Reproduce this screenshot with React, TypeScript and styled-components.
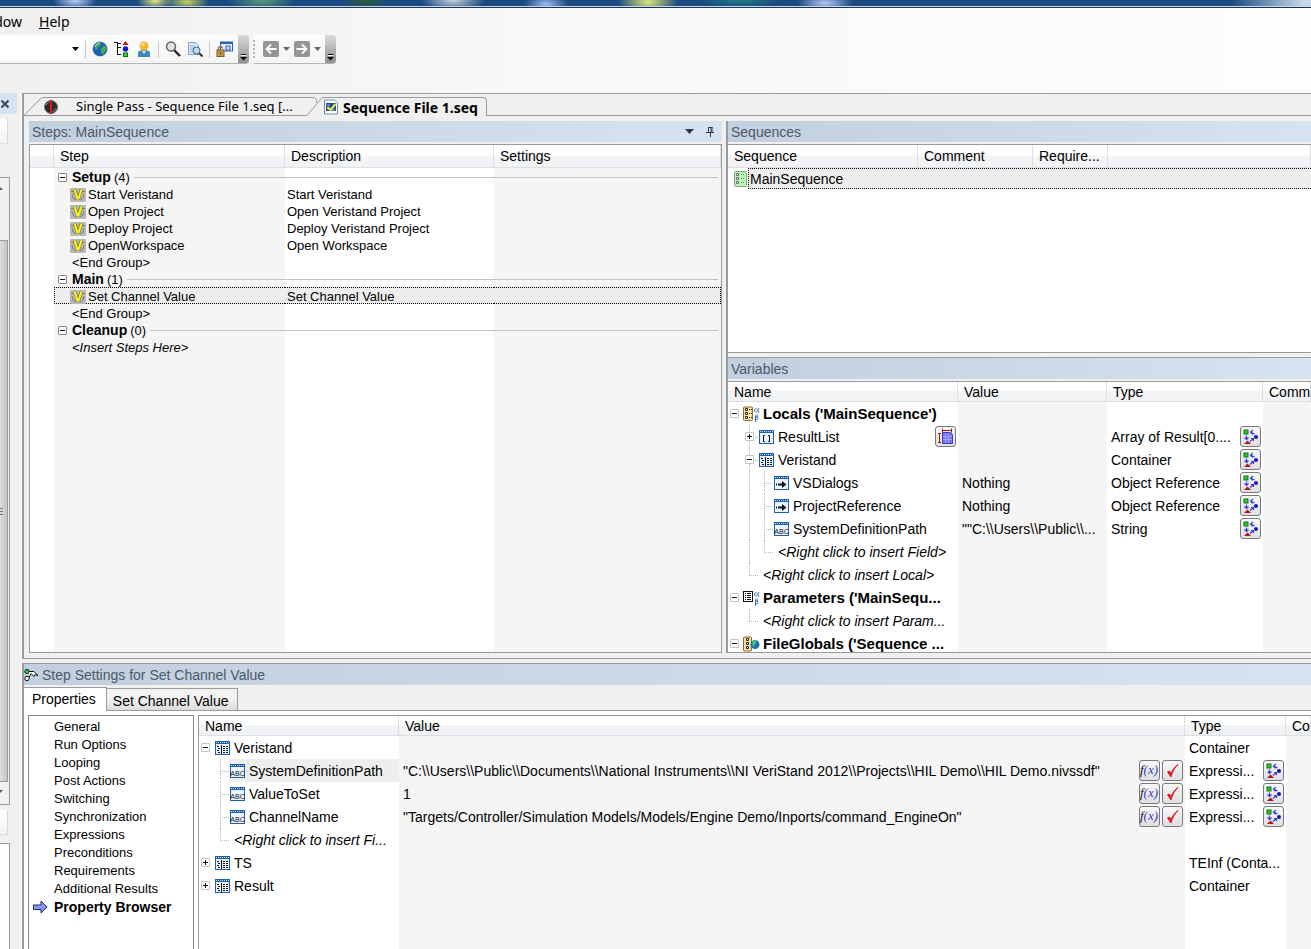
import React from "react";
import styled, { createGlobalStyle, css } from "styled-components";

const SANS = '"Liberation Sans", Arial, sans-serif';
const UI = '"Noto Sans", "Open Sans", sans-serif';
const LINE = "#999b9e";
const STRIPE = "#f5f5f5";
const FACE = "#f0f0f0";

const GlobalStyle = createGlobalStyle`
  *, *::before, *::after { box-sizing: border-box; }
  body { margin: 0; background: ${FACE}; color: #000; font: 14px/16px ${SANS}; overflow: hidden; }
  button, input { font: inherit; color: inherit; padding: 0; margin: 0; border: 0; background: none; }
  svg { display: block; flex: none; }
  ul { list-style: none; margin: 0; padding: 0; }
`;

/* ---------- window chrome ---------- */

const Window = styled.div`
  display: flex;
  flex-direction: column;
  height: 100vh;
  min-height: 600px;
`;

const GlassStrip = styled.div`
  height: 8px;
  flex: none;
  border-bottom: 1px solid #1d3557;
  background:
    linear-gradient(#c9d6e4, #c9d6e4) 0 6px / 100% 1px no-repeat,
    radial-gradient(ellipse 22px 9px at 75px 1px, #b9cdf6, transparent),
    radial-gradient(ellipse 18px 9px at 155px 1px, #e3e47c, transparent),
    radial-gradient(ellipse 22px 9px at 187px 2px, #c6d05e, transparent),
    radial-gradient(ellipse 34px 12px at 262px 0, #5d9a78, transparent),
    radial-gradient(ellipse 24px 10px at 365px 1px, #2b5b3f, transparent),
    radial-gradient(ellipse 32px 12px at 453px 0, #c8d3dc, transparent),
    radial-gradient(ellipse 22px 9px at 546px 4px, #9dbdf2, transparent),
    radial-gradient(ellipse 30px 14px at 648px 2px, #dbe67a, transparent),
    radial-gradient(ellipse 40px 8px at 740px 0, #1f8084, transparent),
    radial-gradient(ellipse 28px 9px at 825px 3px, #b5c8f8, transparent),
    linear-gradient(90deg, transparent calc(100% - 80px), #c5d8e6 calc(100% - 8px)),
    #1b4a82;
`;

const CommandArea = styled.header`
  flex: none;
  height: 85px;
  background: linear-gradient(90deg, #f0f0f0, #f8f8f8 40%, #fdfdfd);
`;

const MenuBar = styled.nav`
  display: flex;
  gap: 17px;
  height: 27px;
  font: 14px/28px ${UI};
`;

const MenuItem = styled.button<{ $cut?: boolean }>`
  display: flex;
  justify-content: flex-end;
  white-space: nowrap;
  ${(p) => p.$cut && css`width: 22px; overflow: hidden;`}
`;

const ToolbarRow = styled.div`
  display: flex;
  gap: 5px;
`;

const Toolbar = styled.div`
  display: flex;
  align-items: center;
  height: 29px;
  background: linear-gradient(#fcfcfc, #f4f4f4);
  border-bottom: 1px solid #b4b4b4;
  border-radius: 0 3px 3px 0;
`;

const Combo = styled.div`
  display: flex;
  width: 82px;
  height: 24px;
  background: #fff;
`;

const ComboInput = styled.input`
  width: 68px;
`;

const ToolButton = styled.button<{ $w?: number }>`
  display: flex;
  align-items: center;
  justify-content: center;
  width: ${(p) => p.$w ?? 22}px;
  height: 24px;
`;

const Separator = styled.span`
  width: 1px;
  height: 17px;
  margin: 0 3px;
  background: #c5c8cc;
`;

const Gripper = styled.span`
  width: 2px;
  height: 18px;
  margin: 0 6px 0 -1px;
  background: repeating-linear-gradient(#b5b5b5 0 2px, transparent 2px 4px);
`;

const Overflow = styled.button`
  display: flex;
  align-items: flex-end;
  justify-content: center;
  align-self: stretch;
  width: 11px;
  margin-left: 3px;
  padding-bottom: 2px;
  border-radius: 0 3px 3px 0;
  background: linear-gradient(#d9d9d9, #8f8f8f);
`;

/* ---------- overall body ---------- */

const Body = styled.div`
  display: flex;
  flex: 1;
  min-height: 0;
`;

const SidePane = styled.aside`
  display: flex;
  flex-direction: column;
  width: 22px;
  padding-right: 4px;
  background: ${FACE};
  border-right: 1px solid #fafafa;
`;

const SideHeader = styled.div`
  display: flex;
  align-items: center;
  height: 21px;
  flex: none;
  background: #d5e2ef;
`;

const SideButton = styled.button`
  width: 8px;
  height: 25px;
  flex: none;
  margin: 5px 0 8px;
  background: linear-gradient(#fff, #f3f3f3);
  border-right: 1px solid #d2dcdc;
  border-bottom: 1px solid #dedede;
`;

const SideScroll = styled.div`
  display: flex;
  flex-direction: column;
  align-items: flex-start;
  justify-content: space-between;
  flex: 1;
  width: 10px;
  margin-top: 25px;
  border: solid ${LINE};
  border-width: 1px 1px 1px 0;
`;

const SideThumb = styled.div`
  display: flex;
  align-items: center;
  flex: 1;
  width: 8px;
  margin: 44px 0 4px;
  border: 1px solid ${LINE};
  border-left: 0;
  background: linear-gradient(90deg, #dcdcde, #c3c4c8);
`;

const SideList = styled.div`
  width: 10px;
  height: 106px;
  flex: none;
  background: #fff;
  border: solid ${LINE};
  border-width: 1px 1px 0 0;
`;

const Main = styled.main`
  display: flex;
  flex-direction: column;
  gap: 4px;
  flex: 1;
  min-width: 0;
`;

const Document = styled.section`
  display: flex;
  flex-direction: column;
  flex: 566 1 0;
  min-height: 0;
  border: solid ${LINE};
  border-width: 1px 0 1px 2px;
`;

const FileTabs = styled.div`
  display: flex;
  align-items: flex-end;
  flex: none;
  height: 22px;
  border-bottom: 1px solid ${LINE};
`;

const FileTab = styled.button<{ $active?: boolean }>`
  display: flex;
  height: 19px;
  margin-bottom: -1px;
  font: ${(p) => (p.$active ? "bold 14px" : "13px")}/19px ${UI};
`;

const FileTabBody = styled.span<{ $active?: boolean }>`
  display: flex;
  align-items: center;
  gap: ${(p) => (p.$active ? 4 : 17)}px;
  height: 19px;
  border-top: 1px solid ${LINE};
  white-space: nowrap;
  ${(p) =>
    p.$active
      ? css`padding-right: 8px; background: ${FACE}; border-right: 1px solid ${LINE}; border-radius: 0 4px 0 0;`
      : css`width: 264px; border-bottom: 1px solid ${LINE};`}
`;

const Workspace = styled.div`
  display: grid;
  grid-template-columns: minmax(0, 693fr) minmax(0, 585fr);
  gap: 4px;
  flex: 1;
  min-height: 0;
  padding: 5px 0 5px 5px;
`;

const RightStack = styled.div`
  display: grid;
  grid-template-rows: minmax(0, 232fr) minmax(0, 296fr);
  gap: 4px;
  min-height: 0;
  border-left: 2px solid ${LINE};
`;

const Panel = styled.section<{ $ruled?: boolean }>`
  display: flex;
  flex-direction: column;
  min-width: 0;
  min-height: 0;
  ${(p) => p.$ruled && css`border-top: 1px solid ${LINE};`}
`;

const PanelHeader = styled.header`
  display: flex;
  align-items: center;
  gap: 3px;
  height: 21px;
  flex: none;
  margin-bottom: 2px;
  padding: 0 3px;
  color: #4b5a68;
  background: linear-gradient(90deg, #c1cfde, #d6e4f1);
`;

const PanelTitle = styled.h2`
  flex: 1;
  margin: 0;
  font: 14px/20px ${SANS};
`;

const HeaderButton = styled.button`
  display: flex;
  justify-content: center;
  width: 18px;
`;

/* ---------- grids ---------- */

const GridBox = styled.div<{ $bands: string; $sides?: boolean }>`
  flex: 1;
  min-width: 0;
  min-height: 0;
  overflow: hidden;
  border: solid ${LINE};
  border-width: ${(p) => (p.$sides ? "1px" : "1px 0")};
  background: linear-gradient(90deg, ${(p) => p.$bands}) #fff;
`;

const Grid = styled.table`
  width: 100%;
  table-layout: fixed;
  border-collapse: separate;
  border-spacing: 0;
`;

const HeadCell = styled.th<{ $w?: number; $h: number }>`
  width: ${(p) => (p.$w ? `${p.$w}px` : "auto")};
  height: ${(p) => p.$h}px;
  padding: 0 0 0 6px;
  overflow: hidden;
  white-space: nowrap;
  text-align: left;
  font-weight: normal;
  background: linear-gradient(#fff 45%, #f3f4f6 50%, #f1f2f4);
  border: solid #dcdfe3;
  border-width: 0 1px 1px 0;
`;

const StepCell = styled.td<{ $sel?: "start" | "mid" | "end" }>`
  height: 17px;
  padding: 0 0 0 2px;
  font-size: 13px;
  line-height: 15px;
  white-space: nowrap;
  ${(p) =>
    p.$sel &&
    css`
      background: #eee;
      border: dotted #000;
      border-width: 1px ${p.$sel === "end" ? 1 : 0}px 1px ${p.$sel === "start" ? 1 : 0}px;
    `}
`;

const StepLine = styled.div<{ $indent?: number }>`
  display: flex;
  align-items: center;
  gap: 2px;
  height: 15px;
  padding-top: 2px;
  padding-left: ${(p) => p.$indent ?? 0}px;
`;

const GroupLine = styled(StepLine)`
  height: 17px;
  gap: 3px;
  padding-right: 3px;
  &::after {
    content: "";
    flex: 1;
    height: 1px;
    margin-left: 1px;
    background: #c3c3c3;
  }
`;

const GroupName = styled.strong`
  font-size: 14px;
  padding-left: 2px;
`;

const SequenceCell = styled.td`
  height: 21px;
  padding: 0;
`;

const SequenceLine = styled.div`
  display: flex;
  align-items: center;
  gap: 1px;
  padding-left: 6px;
`;

const SequenceName = styled.span`
  flex: 1;
  height: 21px;
  padding-left: 1px;
  line-height: 20px;
  background: #eee;
  border: dotted #000;
  border-width: 1px 0 1px 1px;
`;

const Expander = styled.button<{ $tree?: boolean }>`
  position: relative;
  width: 9px;
  height: 9px;
  flex: none;
  background: #fff;
  border: 1px solid ${(p) => (p.$tree ? "#c4c4c4" : "#8a8a8a")};
  border-radius: 1px;
`;

const TreeCell = styled.td<{ $pad?: number }>`
  height: 23px;
  padding: 0 0 0 ${(p) => p.$pad ?? 2}px;
  white-space: nowrap;
`;

const TreeLine = styled.div`
  display: flex;
  align-items: center;
  height: 23px;
`;

const Slot = styled.span<{ $mark: "none" | "pass" | "tee" | "end"; $own?: boolean }>`
  position: relative;
  display: flex;
  align-items: center;
  align-self: stretch;
  width: ${(p) => (p.$own ? 13 : 15)}px;
  flex: none;
  &::before {
    content: ${(p) => (p.$mark === "none" ? "none" : '""')};
    position: absolute;
    left: 4px;
    top: 0;
    height: ${(p) => (p.$mark === "end" ? "50%" : "100%")};
    border-left: 1px dotted #b8b8b8;
  }
  &::after {
    content: ${(p) => (p.$mark === "tee" || p.$mark === "end" ? '""' : "none")};
    position: absolute;
    left: 4px;
    right: 0;
    top: 50%;
    border-top: 1px dotted #b8b8b8;
  }
  & > button { z-index: 1; }
`;

const TreeLabel = styled.span<{ $kind?: "bold" | "hint"; $selected?: boolean }>`
  display: flex;
  align-items: center;
  gap: 3px;
  flex: 1;
  height: 23px;
  ${(p) => p.$kind === "bold" && css`font-weight: bold; font-size: 15px;`}
  ${(p) => p.$kind === "hint" && css`font-style: italic; padding-left: 5px;`}
  ${(p) => p.$selected && css`background: #eee;`}
`;

const WithButtons = styled.div`
  display: flex;
  align-items: center;
  gap: 2px;
  height: 23px;
  padding-right: 2px;
`;

const Grow = styled.span`
  flex: 1;
  min-width: 0;
`;

const GridButton = styled.button`
  display: flex;
  align-items: center;
  justify-content: center;
  width: 21px;
  height: 21px;
  flex: none;
  border: 1px solid #77797c;
  border-radius: 3px;
  background: linear-gradient(#f8f8f8, #dedfe2);
`;

/* ---------- step settings ---------- */

const Settings = styled.section`
  display: flex;
  flex-direction: column;
  flex: 286 1 0;
  min-height: 0;
  border-top: 1px solid ${LINE};
  border-left: 2px solid ${LINE};
`;

const SettingsHeader = styled(PanelHeader)`
  padding-left: 0;
`;

const SettingsTabs = styled.div`
  display: flex;
  align-items: flex-end;
  flex: none;
  height: 24px;
  border-bottom: 1px solid ${LINE};
  background: ${FACE};
`;

const SettingsTab = styled.button<{ $active?: boolean }>`
  border: solid ${LINE};
  border-width: 1px 1px 0 0;
  ${(p) =>
    p.$active
      ? css`height: 24px; margin-bottom: -1px; padding: 0 10px 1px 8px; background: #fff;`
      : css`height: 22px; padding: 2px 8px 0 6px; background: linear-gradient(#f2f2f2 45%, #dcdcdc);`}
`;

const SettingsPane = styled.div`
  display: flex;
  gap: 4px;
  flex: 1;
  min-height: 0;
  padding: 4px 0 0 4px;
  background: #fff;
`;

const CategoryList = styled.ul`
  width: 166px;
  flex: none;
  padding: 2px 4px;
  overflow: hidden;
  border: solid #85878a;
  border-width: 1px 1px 0 1px;
`;

const Category = styled.li<{ $active?: boolean }>`
  display: flex;
  align-items: center;
  height: 18px;
  padding-left: ${(p) => (p.$active ? 0 : 21)}px;
  gap: 6px;
  white-space: nowrap;
  font-size: ${(p) => (p.$active ? 14 : 13)}px;
  font-weight: ${(p) => (p.$active ? "bold" : "normal")};
`;

const PropertyBox = styled(GridBox)`
  border-width: 1px 0 0 1px;
`;

/* ---------- icons ---------- */

const Svg = ({ w = 16, h = 16, children }: { w?: number; h?: number; children: React.ReactNode }) => (
  <svg width={w} height={h} viewBox={`0 0 ${w} ${h}`} fill="none" aria-hidden="true">{children}</svg>
);

const Caret = ({ color = "#000" }: { color?: string }) => (
  <Svg w={7} h={4}><path d="M0 0h7L3.500 4z" fill={color} /></Svg>
);

const Sign = ({ plus }: { plus?: boolean }) => (
  <Svg w={7} h={7}><path d={plus ? "M1 3.500h5M3.500 1v5" : "M1 3.500h5"} stroke="#111" /></Svg>
);

const GlobeIcon = () => (
  <Svg>
    <circle cx="8" cy="8" r="7" fill="#1f5fc4" stroke="#16407f" strokeWidth=".6" />
    <path d="M3 4c2-3 5-2 6-2l-1 3-2 1-1 3-2-1zM9 7l4-3 1.500 3L13 11l-3 3-1-3z" fill="#39b04a" />
    <path d="M3 6c1-3 3-4 5-4" stroke="#a9d8ff" />
  </Svg>
);

const TypesIcon = () => (
  <Svg>
    <path d="M0 1.500h4M3.500 1v13M3.500 6.500H7M3.500 13.500H7M4 2.500h3" stroke="#111" />
    <path d="M11.500 0l3 4h-6z" fill="#c81414" />
    <circle cx="11.500" cy="8" r="2.700" fill="#1616c8" />
    <rect x="9.500" y="12" width="4" height="3.500" fill="#35e035" stroke="#0b6b0b" />
  </Svg>
);

const UserIcon = () => (
  <Svg>
    <path d="M2 16v-4c0-2 3-3 6-3s6 1 6 3v4z" fill="#3d86b5" />
    <path d="M6 10h4l-2 3z" fill="#d9ecf7" />
    <circle cx="8" cy="5" r="4.500" fill="#f5b52a" />
    <circle cx="7" cy="3.500" r="1.800" fill="#fde08b" />
  </Svg>
);

const SearchIcon = () => (
  <Svg>
    <path d="M9 9l6 6" stroke="#222" strokeWidth="2.400" />
    <circle cx="6" cy="5.500" r="4.500" fill="#dfe3e6" stroke="#666" strokeWidth="1.500" />
  </Svg>
);

const FindPageIcon = () => (
  <Svg>
    <path d="M1.500 1.500h7l3 3v9h-10z" fill="#dcebfb" stroke="#7da3cd" />
    <path d="M3 5h5M3 7h4M3 9h4M3 11h4" stroke="#8db5dd" />
    <path d="M12 12l3.500 3.500" stroke="#333" strokeWidth="2" />
    <circle cx="9.500" cy="9.500" r="3.500" fill="#b9dcf6" stroke="#44617e" />
  </Svg>
);

const LockIcon = () => (
  <Svg w={17}>
    <rect x="4.500" y="1" width="12" height="9" fill="#e7f1ff" stroke="#2d5fb4" />
    <path d="M4 2h13" stroke="#2d5fb4" strokeWidth="2" />
    <rect x="10" y="5" width="4" height="4" fill="#cfe2fb" stroke="#2d5fb4" />
    <rect x="1" y="9" width="7" height="6.500" fill="#c69a45" stroke="#7d5c22" />
    <path d="M2.500 9V7.500c0-2.500 4-2.500 4 0" stroke="#8e7a55" strokeWidth="1.500" />
    <path d="M4.500 11v2.500" stroke="#5e4415" />
  </Svg>
);

const NavIcon = ({ forward }: { forward?: boolean }) => (
  <Svg>
    <rect width="16" height="16" rx="2" fill="#949494" />
    <path d={forward ? "M2.500 8h10M8 3.500L12.500 8 8 12.500" : "M13.500 8h-10M8 3.500L3.500 8 8 12.500"} stroke="#fff" strokeWidth="1.800" />
  </Svg>
);

const OverflowIcon = () => (
  <Svg w={7} h={7}><path d="M1 .5h5" stroke="#000" /><path d="M1 1.500h5" stroke="#fff" /><path d="M0 3h7L3.500 6.500z" fill="#000" /></Svg>
);

const CloseIcon = () => (
  <Svg w={10} h={10}><path d="M1.500 1.500l7 7M8.500 1.500l-7 7" stroke="#3a4653" strokeWidth="2" /></Svg>
);

const RunIcon = () => (
  <Svg>
    <circle cx="8" cy="8" r="6.500" fill="#2b2b2b" stroke="#777" />
    <path d="M3 6l3-3M10 13l3-4" stroke="#888" />
    <path d="M8 1v14" stroke="#e01919" strokeWidth="2" />
  </Svg>
);

const FileIcon = () => (
  <Svg>
    <path d="M1.500 1h10l3 3v11h-13z" fill="#fff" stroke="#6a88c0" />
    <rect x="3" y="4" width="10" height="8" fill="#234a9a" />
    <path d="M4 6h3M4 10h2M9 11h3" stroke="#7ac2e8" />
    <path d="M4.500 8l3 3 5-6" stroke="#f4ec2c" strokeWidth="2" />
  </Svg>
);

const PinIcon = () => (
  <Svg w={9} h={10}><path d="M2.500 0v5M2 .5h4.500M6 0v5M0 5.500h8M4.500 6v4M5 0v5" stroke="#2c3a48" /></Svg>
);

const VeristandIcon = () => (
  <Svg>
    <rect y="1" width="16" height="14" rx="1" fill="#b8b8b8" />
    <path d="M2 7q0 5 4 6M14 7q0 5-4 6M1 4.500h3M12 4.500h3" stroke="#7c7c7c" />
    <path d="M4.500 2.500L7.500 11h1l3-8.500" stroke="#77732a" strokeWidth="3.500" />
    <path d="M4.500 2.500L7.500 11.500h1l3-9" stroke="#fbf41c" strokeWidth="2.200" />
  </Svg>
);

const SequenceIcon = () => (
  <Svg w={13}>
    <rect x=".5" y=".5" width="12" height="15" rx="1" fill="#b9f5b9" stroke="#78a878" />
    <path d="M2.500 2.500h2v2h-2zM2.500 6.500h2v2h-2zM2.500 10.500h2v2h-2z" fill="#fff" stroke="#666" />
    <path d="M7 3.500h4M7 7.500h4M7 11.500h4" stroke="#4a8a4a" strokeDasharray="1 1" />
  </Svg>
);

const greek = (
  <g stroke="#3c78b4">
    <path d="M16 2c-2 6-5 4-4.500 2s3-2 4.500 3" />
    <path d="M12.500 16V10c0-2 3-1.500 2.500 0s-2 1-2 1c3 0 3 3 0 2.500" />
  </g>
);

const LocalsIcon = () => (
  <Svg w={17}>
    <rect x=".5" y="1" width="9" height="13.500" rx="1" fill="#fbe29a" stroke="#8a6a2a" />
    <path d="M2.500 2.500h2v2h-2zM2.500 6.500h2v2h-2zM2.500 10.500h2v2h-2z" fill="#fff" stroke="#222" />
    <path d="M6 3.500h3M6 7.500h3M6 11.500h3" stroke="#222" strokeDasharray="1 1" />
    {greek}
  </Svg>
);

const ParametersIcon = () => (
  <Svg w={17}>
    <rect x=".5" y="1.500" width="9" height="10" fill="#fff" stroke="#111" />
    <path d="M2 3.500h1M4 3.500h4M2 5.500h1M4 5.500h4M2 7.500h1M4 7.500h4M2 9.500h1M4 9.500h4" stroke="#111" />
    {greek}
  </Svg>
);

const GlobalsIcon = () => (
  <Svg w={17}>
    <rect x=".5" y="1" width="8" height="14" rx="1" fill="#fbe29a" stroke="#8a6a2a" />
    <path d="M3.500 2.500h2v2h-2zM3.500 6.500h2v2h-2zM3.500 10.500h2v2h-2z" fill="#fff" stroke="#222" />
    <circle cx="12" cy="8.500" r="4.500" fill="#1c6fae" />
    <path d="M9 6c2-2 4-2 5-1l-2 4-2 2z" fill="#46bd7c" />
  </Svg>
);

const TypeFrame = ({ children }: { children: React.ReactNode }) => (
  <Svg w={17}>
    <rect x="1.500" y="1.500" width="14" height="13" fill="#eaf3ff" stroke="#1f5fae" />
    <path d="M1 2.500h15" stroke="#1f5fae" strokeWidth="3" />
    <path d="M2 2.500h13" stroke="#cfe2fa" strokeDasharray="1 1" />
    {children}
  </Svg>
);

const ContainerIcon = () => (
  <TypeFrame>
    <path d="M3 6.500h2M4 8.500h2M3 10.500h2M4 12.500h2M9 6.500h2M9 8.500h2M9 10.500h2M9 12.500h2M12 6.500h2M12 8.500h2M12 10.500h2M12 12.500h2" stroke="#111" />
    <path d="M7.500 5v9" stroke="#111" />
  </TypeFrame>
);

const ArrayIcon = () => (
  <TypeFrame><path d="M7 6.500H5.500v6H7M10 6.500h1.500v6H10" stroke="#111" /></TypeFrame>
);

const RefIcon = () => (
  <TypeFrame><path d="M3 9.500h1M5 9.500h5" stroke="#111" strokeWidth="2" /><path d="M9 6l4.500 3.500L9 13z" fill="#111" /></TypeFrame>
);

const StringIcon = () => (
  <TypeFrame>
    <text x="8.500" y="12.500" textAnchor="middle" fontFamily="Liberation Sans Narrow, Liberation Sans, sans-serif" fontSize="7" fill="#111">ABC</text>
  </TypeFrame>
);

const TypeLinkIcon = () => (
  <Svg w={17} h={17}>
    <rect x="2" y="2" width="4" height="4" fill="#2fc52f" stroke="#0d7a0d" />
    <path d="M2 16l3.500-3.500L9 16z" fill="#b01616" />
    <circle cx="14" cy="9" r="2" fill="#1818a8" />
    <path d="M4.500 7.500v4M2.500 9.500l2 2 2-2M12.500 6L8.500 4M11 2L8.500 4l2 2.500M8 13.500l3-2.500M9 10.500h2.500V13" stroke="#3a3ae0" strokeWidth="1.200" />
  </Svg>
);

const ArrayBoundsIcon = () => (
  <Svg w={17} h={17}>
    <path d="M5.500 4.500h8l2 2v9h-10z" fill="#7474f4" stroke="#3a3ac0" />
    <path d="M8.500 5v10M11.500 5v10M6 8.500h9M6 11.500h9" stroke="#a4a4fb" />
    <path d="M5 2.500h10M5.500 .5v4M14.500 .5v4M2.500 5v10M1 5.500h3M1 14.500h3" stroke="#a01818" />
  </Svg>
);

const FxIcon = () => (
  <Svg w={19} h={17}>
    <text x="9" y="12" textAnchor="middle" fontFamily="Liberation Serif, serif" fontStyle="italic" fontSize="13" fill="#111">
      f<tspan fill="#3a3ac8">(x)</tspan>
    </text>
  </Svg>
);

const CheckIcon = () => (
  <Svg w={17} h={17}><path d="M3.500 10l3.500 5C8.500 9 11 5.500 14 2.500 10.500 5 8.500 8 7 11.500L5.500 9z" fill="#e0202a" stroke="#e0202a" /></Svg>
);

const ArrowIcon = () => (
  <Svg w={15} h={14}><path d="M.5 5H8V1l6 6-6 6V9.500H.5z" fill="#7f9af0" stroke="#1d2a78" /></Svg>
);

const StepSettingsIcon = () => (
  <Svg w={15} h={14}>
    <circle cx="3" cy="3.500" r="2.200" fill="#39b54a" stroke="#0d3d14" />
    <circle cx="3" cy="10.500" r="2.200" fill="#fff" stroke="#111" />
    <path d="M5 3.500h5l4 4-3-1-1 2-3-3-2 4" fill="#fff" stroke="#111" />
  </Svg>
);

/* ---------- data ---------- */

type Step = { name: string; description: string };
type Group = { name: string; steps: Step[]; selected?: boolean };

const groups: Group[] = [
  {
    name: "Setup",
    steps: [
      { name: "Start Veristand", description: "Start Veristand" },
      { name: "Open Project", description: "Open Veristand Project" },
      { name: "Deploy Project", description: "Deploy Veristand Project" },
      { name: "OpenWorkspace", description: "Open Workspace" },
    ],
  },
  { name: "Main", selected: true, steps: [{ name: "Set Channel Value", description: "Set Channel Value" }] },
  { name: "Cleanup", steps: [] },
];

type Mark = "none" | "pass" | "tee" | "end";
type Node = {
  label: string;
  marks: Mark[];
  open?: boolean;
  icon?: React.ReactNode;
  kind?: "bold" | "hint";
  value?: string;
  type?: string;
  bounds?: boolean;
  link?: boolean;
  editable?: boolean;
  selected?: boolean;
};

const variables: Node[] = [
  { label: "Locals ('MainSequence')", marks: ["none"], open: true, icon: <LocalsIcon />, kind: "bold" },
  { label: "ResultList", marks: ["none", "tee"], open: false, icon: <ArrayIcon />, type: "Array of Result[0....", bounds: true, link: true },
  { label: "Veristand", marks: ["none", "tee"], open: true, icon: <ContainerIcon />, type: "Container", link: true },
  { label: "VSDialogs", marks: ["none", "pass", "tee"], icon: <RefIcon />, value: "Nothing", type: "Object Reference", link: true },
  { label: "ProjectReference", marks: ["none", "pass", "tee"], icon: <RefIcon />, value: "Nothing", type: "Object Reference", link: true },
  { label: "SystemDefinitionPath", marks: ["none", "pass", "tee"], icon: <StringIcon />, value: '""C:\\\\Users\\\\Public\\\\...', type: "String", link: true },
  { label: "<Right click to insert Field>", marks: ["none", "pass", "end"], kind: "hint" },
  { label: "<Right click to insert Local>", marks: ["none", "end"], kind: "hint" },
  { label: "Parameters ('MainSequ...", marks: ["none"], open: true, icon: <ParametersIcon />, kind: "bold" },
  { label: "<Right click to insert Param...", marks: ["none", "end"], kind: "hint" },
  { label: "FileGlobals ('Sequence ...", marks: ["none"], open: true, icon: <GlobalsIcon />, kind: "bold" },
];

const properties: Node[] = [
  { label: "Veristand", marks: ["none"], open: true, icon: <ContainerIcon />, type: "Container" },
  {
    label: "SystemDefinitionPath", marks: ["none", "tee"], icon: <StringIcon />, type: "Expressi...", link: true, editable: true, selected: true,
    value: '"C:\\\\Users\\\\Public\\\\Documents\\\\National Instruments\\\\NI VeriStand 2012\\\\Projects\\\\HIL Demo\\\\HIL Demo.nivssdf"',
  },
  { label: "ValueToSet", marks: ["none", "tee"], icon: <StringIcon />, value: "1", type: "Expressi...", link: true, editable: true },
  {
    label: "ChannelName", marks: ["none", "tee"], icon: <StringIcon />, type: "Expressi...", link: true, editable: true,
    value: '"Targets/Controller/Simulation Models/Models/Engine Demo/Inports/command_EngineOn"',
  },
  { label: "<Right click to insert Fi...", marks: ["none", "end"], kind: "hint" },
  { label: "TS", marks: ["none"], open: false, icon: <ContainerIcon />, type: "TEInf (Conta..." },
  { label: "Result", marks: ["none"], open: false, icon: <ContainerIcon />, type: "Container" },
];

const categories = [
  "General", "Run Options", "Looping", "Post Actions", "Switching", "Synchronization",
  "Expressions", "Preconditions", "Requirements", "Additional Results", "Property Browser",
];

/* ---------- composed parts ---------- */

const TreeRow = ({ node }: { node: Node }) => {
  const last = node.marks.length - 1;
  return (
    <tr>
      <TreeCell>
        <TreeLine>
          {node.marks.map((mark, i) => (
            <Slot key={i} $mark={mark} $own={i === last}>
              {i === last && node.open !== undefined && (
                <Expander $tree aria-label={`Toggle ${node.label}`}><Sign plus={!node.open} /></Expander>
              )}
            </Slot>
          ))}
          <TreeLabel $kind={node.kind} $selected={node.selected}>{node.icon}{node.label}</TreeLabel>
          {node.bounds && (
            <WithButtons><GridButton aria-label="Array bounds"><ArrayBoundsIcon /></GridButton></WithButtons>
          )}
        </TreeLine>
      </TreeCell>
      <TreeCell $pad={4}>
        <WithButtons>
          <Grow>{node.value}</Grow>
          {node.editable && (
            <>
              <GridButton aria-label="Expression"><FxIcon /></GridButton>
              <GridButton aria-label="Check expression"><CheckIcon /></GridButton>
            </>
          )}
        </WithButtons>
      </TreeCell>
      <TreeCell $pad={4}>
        <WithButtons>
          <Grow>{node.type}</Grow>
          {node.link && <GridButton aria-label="Type"><TypeLinkIcon /></GridButton>}
        </WithButtons>
      </TreeCell>
      <TreeCell />
    </tr>
  );
};

const StepGroup = ({ group }: { group: Group }) => (
  <>
    <tr>
      <StepCell />
      <StepCell colSpan={3}>
        <GroupLine $indent={2}>
          <Expander aria-label={`Toggle ${group.name}`}><Sign /></Expander>
          <GroupName>{group.name}</GroupName>
          <span>({group.steps.length})</span>
        </GroupLine>
      </StepCell>
    </tr>
    {group.steps.map((step) => (
      <tr key={step.name}>
        <StepCell />
        <StepCell $sel={group.selected ? "start" : undefined}>
          <StepLine $indent={group.selected ? 13 : 14}><VeristandIcon />{step.name}</StepLine>
        </StepCell>
        <StepCell $sel={group.selected ? "mid" : undefined}><StepLine>{step.description}</StepLine></StepCell>
        <StepCell $sel={group.selected ? "end" : undefined} />
      </tr>
    ))}
    <tr>
      <StepCell />
      <StepCell>
        <StepLine $indent={16}>{group.steps.length ? "<End Group>" : <em>{"<Insert Steps Here>"}</em>}</StepLine>
      </StepCell>
      <StepCell />
      <StepCell />
    </tr>
  </>
);

export default function App() {
  return (
    <Window>
      <GlobalStyle />
      <GlassStrip />
      <CommandArea>
        <MenuBar>
          <MenuItem $cut>Window</MenuItem>
          <MenuItem><u>H</u>elp</MenuItem>
        </MenuBar>
        <ToolbarRow>
          <Toolbar>
            <Combo>
              <ComboInput aria-label="Environment" />
              <ToolButton $w={14} aria-label="Open list"><Caret /></ToolButton>
            </Combo>
            <Separator />
            <ToolButton aria-label="Globals"><GlobeIcon /></ToolButton>
            <ToolButton aria-label="Types"><TypesIcon /></ToolButton>
            <ToolButton aria-label="Users"><UserIcon /></ToolButton>
            <Separator />
            <ToolButton aria-label="Find"><SearchIcon /></ToolButton>
            <ToolButton aria-label="Find in files"><FindPageIcon /></ToolButton>
            <Separator />
            <ToolButton aria-label="Unlock"><LockIcon /></ToolButton>
            <Overflow aria-label="Toolbar options"><OverflowIcon /></Overflow>
          </Toolbar>
          <Toolbar>
            <Gripper />
            <ToolButton $w={20} aria-label="Back"><NavIcon /></ToolButton>
            <ToolButton $w={10} aria-label="Back history"><Caret color="#666" /></ToolButton>
            <ToolButton aria-label="Forward"><NavIcon forward /></ToolButton>
            <ToolButton $w={9} aria-label="Forward history"><Caret color="#666" /></ToolButton>
            <Overflow aria-label="Toolbar options"><OverflowIcon /></Overflow>
          </Toolbar>
        </ToolbarRow>
      </CommandArea>

      <Body>
        <SidePane>
          <SideHeader><button aria-label="Close"><CloseIcon /></button></SideHeader>
          <SideButton aria-label="Insert" />
          <SideScroll>
            <Svg w={3} h={18}><path d="M0 9l3 3H0z" fill="#555" /></Svg>
            <SideThumb><Svg w={3} h={9}><path d="M0 1.500h3M0 4.500h3M0 7.500h3" stroke="#777" /></Svg></SideThumb>
            <Svg w={3} h={18}><path d="M0 4h3L0 7z" fill="#555" /></Svg>
          </SideScroll>
          <SideButton aria-label="Templates" />
          <SideList />
        </SidePane>

        <Main>
          <Document>
            <FileTabs>
              <FileTab>
                <Svg w={19} h={19}><path d="M0 18.500L16 2Q17.500 .5 19 .5" stroke={LINE} /></Svg>
                <FileTabBody><RunIcon />Single Pass - Sequence File 1.seq [...</FileTabBody>
              </FileTab>
              <FileTab $active>
                <Svg w={16} h={19}>
                  <path d="M0 19L15 2l1-1v18z" fill={FACE} />
                  <path d="M0 18.500L14 2Q15 .5 16 .5M0 .5h7Q9.500 .5 10 6" stroke={LINE} />
                </Svg>
                <FileTabBody $active><FileIcon />Sequence File 1.seq</FileTabBody>
              </FileTab>
            </FileTabs>

            <Workspace>
              <Panel>
                <PanelHeader>
                  <PanelTitle>Steps: MainSequence</PanelTitle>
                  <HeaderButton aria-label="Pane menu"><Svg w={9} h={5}><path d="M0 0h9L4.500 5z" fill="#2c3a48" /></Svg></HeaderButton>
                  <HeaderButton aria-label="Pin pane"><PinIcon /></HeaderButton>
                </PanelHeader>
                <GridBox $sides $bands={`#fff 24px, ${STRIPE} 24px 255px, #fff 255px 464px, ${STRIPE} 464px`}>
                  <Grid>
                    <thead>
                      <tr>
                        <HeadCell $h={23} $w={24} />
                        <HeadCell $h={23} $w={231}>Step</HeadCell>
                        <HeadCell $h={23} $w={209}>Description</HeadCell>
                        <HeadCell $h={23}>Settings</HeadCell>
                      </tr>
                    </thead>
                    <tbody>{groups.map((g) => <StepGroup key={g.name} group={g} />)}</tbody>
                  </Grid>
                </GridBox>
              </Panel>

              <RightStack>
                <Panel>
                  <PanelHeader><PanelTitle>Sequences</PanelTitle></PanelHeader>
                  <GridBox $bands="#fff, #fff">
                    <Grid>
                      <thead>
                        <tr>
                          <HeadCell $h={23} $w={190}>Sequence</HeadCell>
                          <HeadCell $h={23} $w={115}>Comment</HeadCell>
                          <HeadCell $h={23} $w={75}>Require...</HeadCell>
                          <HeadCell $h={23} />
                        </tr>
                      </thead>
                      <tbody>
                        <tr>
                          <SequenceCell colSpan={4}>
                            <SequenceLine><SequenceIcon /><SequenceName>MainSequence</SequenceName></SequenceLine>
                          </SequenceCell>
                        </tr>
                      </tbody>
                    </Grid>
                  </GridBox>
                </Panel>
                <Panel $ruled>
                  <PanelHeader><PanelTitle>Variables</PanelTitle></PanelHeader>
                  <GridBox $bands={`#fff 230px, ${STRIPE} 230px 379px, #fff 379px 535px, ${STRIPE} 535px`}>
                    <Grid>
                      <thead>
                        <tr>
                          <HeadCell $h={20} $w={230}>Name</HeadCell>
                          <HeadCell $h={20} $w={149}>Value</HeadCell>
                          <HeadCell $h={20} $w={156}>Type</HeadCell>
                          <HeadCell $h={20}>Comment</HeadCell>
                        </tr>
                      </thead>
                      <tbody>{variables.map((n) => <TreeRow key={n.label} node={n} />)}</tbody>
                    </Grid>
                  </GridBox>
                </Panel>
              </RightStack>
            </Workspace>
          </Document>

          <Settings>
            <SettingsHeader>
              <StepSettingsIcon />
              <PanelTitle>Step Settings for Set Channel Value</PanelTitle>
            </SettingsHeader>
            <SettingsTabs>
              <SettingsTab $active>Properties</SettingsTab>
              <SettingsTab>Set Channel Value</SettingsTab>
            </SettingsTabs>
            <SettingsPane>
              <CategoryList>
                {categories.map((c, i) => (
                  <Category key={c} $active={i === categories.length - 1}>
                    {i === categories.length - 1 && <ArrowIcon />}{c}
                  </Category>
                ))}
              </CategoryList>
              <PropertyBox $bands={`#fff 200px, ${STRIPE} 200px calc(100% - 126px), #fff calc(100% - 126px) calc(100% - 25px), ${STRIPE} calc(100% - 25px)`}>
                <Grid>
                  <thead>
                    <tr>
                      <HeadCell $h={20} $w={200}>Name</HeadCell>
                      <HeadCell $h={20}>Value</HeadCell>
                      <HeadCell $h={20} $w={101}>Type</HeadCell>
                      <HeadCell $h={20} $w={25}>Comment</HeadCell>
                    </tr>
                  </thead>
                  <tbody>{properties.map((n) => <TreeRow key={n.label} node={n} />)}</tbody>
                </Grid>
              </PropertyBox>
            </SettingsPane>
          </Settings>
        </Main>
      </Body>
    </Window>
  );
}
